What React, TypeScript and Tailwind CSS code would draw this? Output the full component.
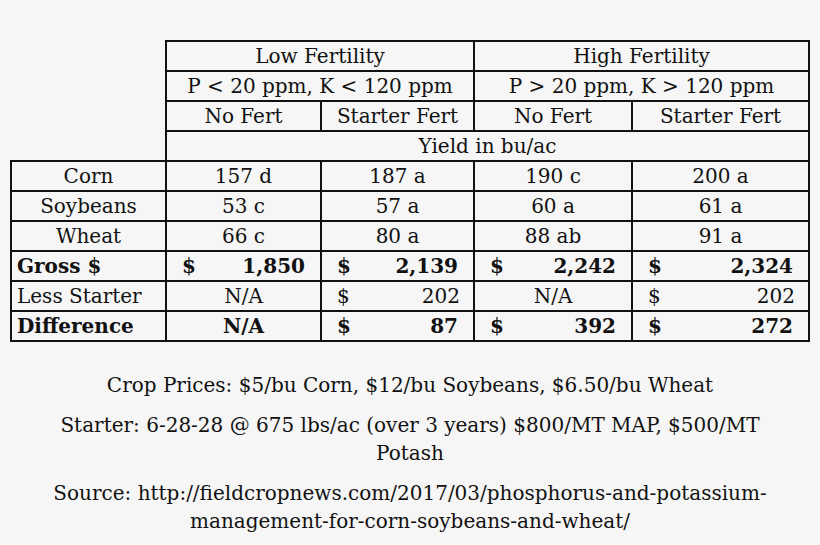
import React from "react";

const B = "border-2 border-[#111]";

function Money({ v, bold, pr = "pr-[15px]" }: { v: string; bold?: boolean; pr?: string }) {
  return (
    <div className={`flex justify-between pl-[15px] ${pr} ${bold ? "font-bold" : ""}`}>
      <span>$</span>
      <span>{v}</span>
    </div>
  );
}

export default function App() {
  const cell = `${B} p-0 h-[30px] leading-[28px] text-center`;
  return (
    <div
      className="w-[820px] h-[545px] bg-[#f6f6f6] text-[#111] overflow-hidden"
      style={{ fontFamily: '"DejaVu Serif", "Liberation Serif", serif' }}
    >
      <div className="pt-[40px] pl-[10px]">
        <table className="table-fixed border-collapse w-[800px] text-[20px]">
          <colgroup>
            <col className="w-[155px]" />
            <col className="w-[155px]" />
            <col className="w-[153px]" />
            <col className="w-[158px]" />
            <col className="w-[177px]" />
          </colgroup>
          <tbody>
            <tr>
              <td rowSpan={4} className="border-0 p-0"></td>
              <td colSpan={2} className={cell}>Low Fertility</td>
              <td colSpan={2} className={cell}>High Fertility</td>
            </tr>
            <tr>
              <td colSpan={2} className={cell}>P &lt; 20 ppm, K &lt; 120 ppm</td>
              <td colSpan={2} className={cell}>P &gt; 20 ppm, K &gt; 120 ppm</td>
            </tr>
            <tr>
              <td className={cell}>No Fert</td>
              <td className={cell}>Starter Fert</td>
              <td className={cell}>No Fert</td>
              <td className={cell}>Starter Fert</td>
            </tr>
            <tr>
              <td colSpan={4} className={cell}>Yield in bu/ac</td>
            </tr>
            <tr>
              <td className={cell}>Corn</td>
              <td className={cell}>157 d</td>
              <td className={cell}>187 a</td>
              <td className={cell}>190 c</td>
              <td className={cell}>200 a</td>
            </tr>
            <tr>
              <td className={cell}>Soybeans</td>
              <td className={cell}>53 c</td>
              <td className={cell}>57 a</td>
              <td className={cell}>60 a</td>
              <td className={cell}>61 a</td>
            </tr>
            <tr>
              <td className={cell}>Wheat</td>
              <td className={cell}>66 c</td>
              <td className={cell}>80 a</td>
              <td className={cell}>88 ab</td>
              <td className={cell}>91 a</td>
            </tr>
            <tr>
              <td className={`${cell} !text-left pl-[5px] font-bold`}>Gross $</td>
              <td className={cell}><Money v="1,850" bold /></td>
              <td className={cell}><Money v="2,139" bold /></td>
              <td className={cell}><Money v="2,242" bold /></td>
              <td className={cell}><Money v="2,324" bold /></td>
            </tr>
            <tr>
              <td className={`${cell} !text-left pl-[5px]`}>Less Starter</td>
              <td className={cell}>N/A</td>
              <td className={cell}><Money v="202" pr="pr-[13px]" /></td>
              <td className={cell}>N/A</td>
              <td className={cell}><Money v="202" pr="pr-[13px]" /></td>
            </tr>
            <tr>
              <td className={`${cell} !text-left pl-[5px] font-bold`}>Difference</td>
              <td className={`${cell} font-bold`}>N/A</td>
              <td className={cell}><Money v="87" bold /></td>
              <td className={cell}><Money v="392" bold /></td>
              <td className={cell}><Money v="272" bold /></td>
            </tr>
          </tbody>
        </table>
      </div>
      <div className="mt-[29px] flex flex-col items-center gap-[12px] text-center text-[20px] leading-[28px]">
        <p>Crop Prices: $5/bu Corn, $12/bu Soybeans, $6.50/bu Wheat</p>
        <p>
          Starter: 6-28-28 @ 675 lbs/ac (over 3 years) $800/MT MAP, $500/MT
          <br />
          Potash
        </p>
        <p>
          Source: http://fieldcropnews.com/2017/03/phosphorus-and-potassium-
          <br />
          management-for-corn-soybeans-and-wheat/
        </p>
      </div>
    </div>
  );
}
